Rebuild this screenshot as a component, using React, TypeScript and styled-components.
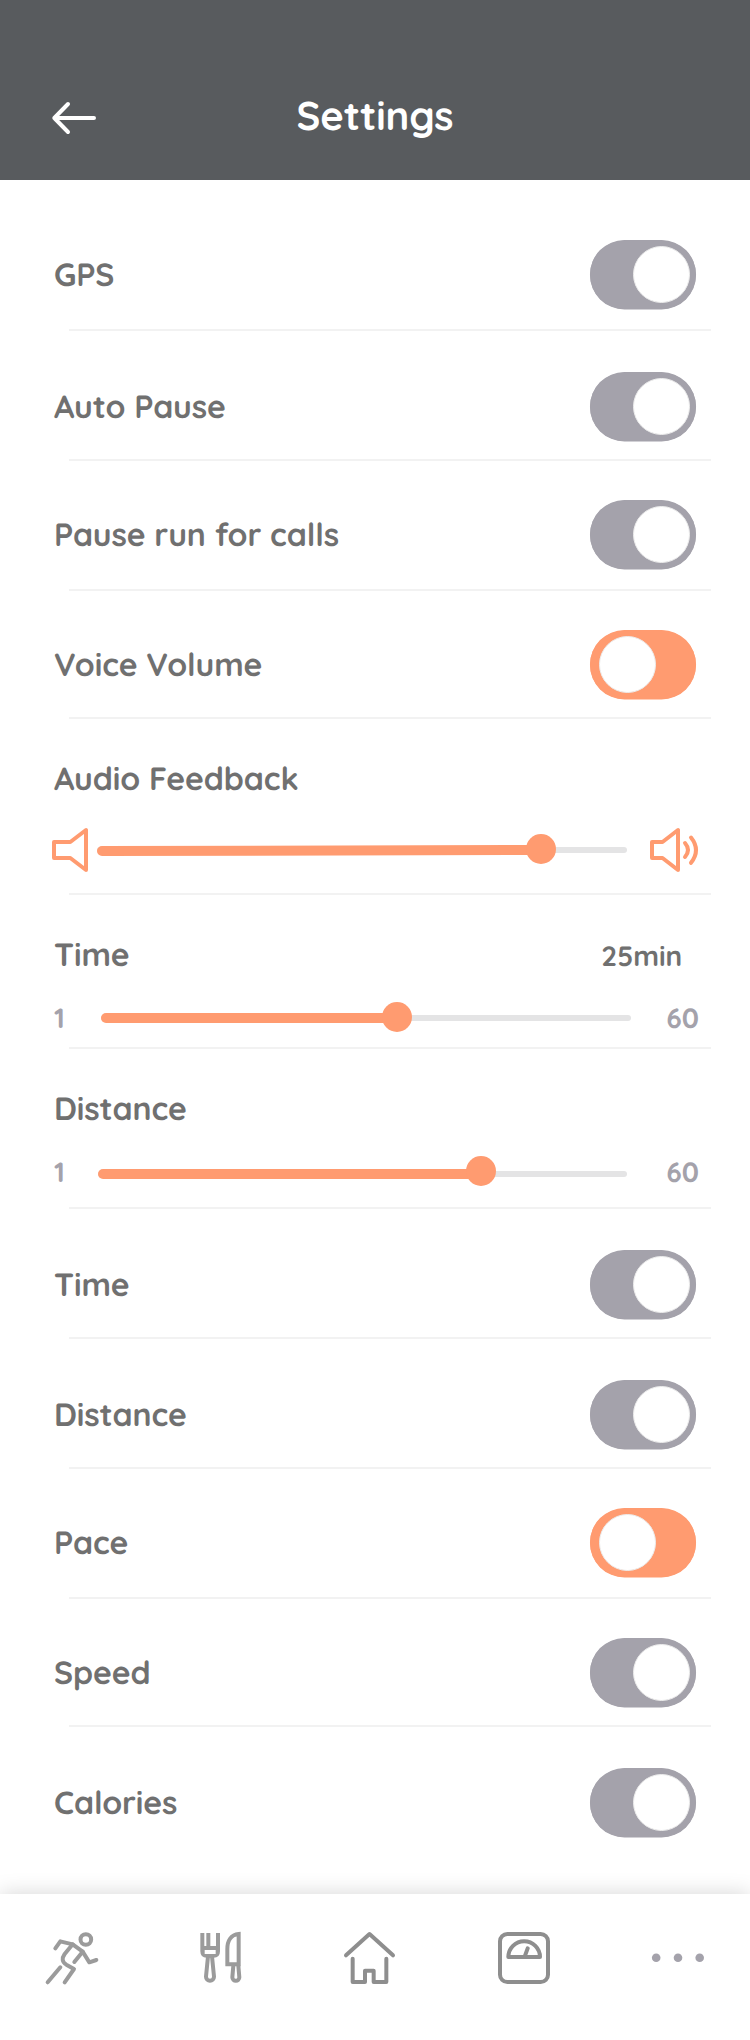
import React, { useState } from "react";
import styled, { createGlobalStyle } from "styled-components";

const color = {
  header: "#585b5e",
  accent: "#ff9b70",
  muted: "#a4a2ab",
  text: "#707070",
  line: "#f2f2f2",
  track: "#e4e4e5",
};

const GlobalStyle = createGlobalStyle`
  * { box-sizing: border-box; }
  body {
    margin: 0;
    background: #fff;
    font-family: Quicksand, Lato, "Open Sans", sans-serif;
    text-rendering: geometricPrecision;
  }
  svg { display: block; overflow: visible; }
  button { border: 0; padding: 0; background: none; }
`;

const Screen = styled.div`
  display: flex;
  flex-direction: column;
  width: 750px;
  height: 2040px;
  background: #fff;
  overflow: hidden;
`;

const Header = styled.header`
  display: grid;
  grid-template-columns: 100px 1fr 100px;
  height: 180px;
  padding: 56px 0 0;
  align-items: center;
  background: ${color.header};
`;

const BackButton = styled.button`
  margin-left: 52px;
  width: 44px;
`;

const Title = styled.h1`
  margin: 0;
  text-align: center;
  font-size: 40px;
  line-height: 48px;
  font-weight: 700;
  letter-spacing: -0.1px;
  color: #fff;
  padding-bottom: 6px;
`;

const List = styled.main`
  flex: 1;
`;

const Row = styled.section<{ $height: number; $top: number }>`
  display: flex;
  flex-direction: column;
  height: ${(p) => p.$height}px;
  padding-top: ${(p) => p.$top}px;
`;

const RowLine = styled.div<{ $below?: number }>`
  display: flex;
  justify-content: space-between;
  align-items: center;
  padding: 0 54px;
  margin-bottom: ${(p) => p.$below ?? 0}px;
`;

const Divider = styled.hr`
  width: 642px;
  height: 2px;
  margin: auto 0 0 69px;
  border: 0;
  background: ${color.line};
`;

const Label = styled.span`
  font-size: 32px;
  line-height: 40px;
  padding-bottom: 2px;
  font-weight: 700;
  letter-spacing: -0.1px;
  color: ${color.text};
  white-space: nowrap;
`;

const Value = styled.span`
  margin-right: 14px;
  font-size: 28px;
  line-height: 40px;
  padding-top: 2px;
  font-weight: 700;
  letter-spacing: -0.1px;
  color: ${color.text};
`;

const Switch = styled.button<{ $accent: boolean }>`
  display: flex;
  justify-content: ${(p) => (p.$accent ? "flex-start" : "flex-end")};
  width: 106px;
  height: 69px;
  padding: 6px 6px 0 9px;
  border-radius: 35px;
  background: ${(p) => (p.$accent ? color.accent : color.muted)};
  box-shadow: 0 0.5px 0 ${(p) => (p.$accent ? color.accent : color.muted)};
`;

const Knob = styled.span`
  width: 57px;
  height: 57px;
  border-radius: 50%;
  border: 1px solid #ececec;
  background: #fff;
`;

const SliderLine = styled.div<{ $gap: number }>`
  display: grid;
  grid-template-columns: ${(p) => p.$gap}px auto 1fr;
  align-items: center;
  height: 44px;
  padding: 0 52px;
`;

const Limit = styled.span<{ $end?: boolean; $lift?: number }>`
  padding-left: ${(p) => (p.$end ? 0 : 2)}px;
  padding-bottom: ${(p) => p.$lift ?? 0}px;
  margin-right: ${(p) => (p.$end ? -1 : 0)}px;
  font-size: 28px;
  line-height: 36px;
  font-weight: 700;
  color: ${color.muted};
  text-align: ${(p) => (p.$end ? "right" : "left")};
`;

const VolumeHigh = styled.span`
  justify-self: end;
`;

const Track = styled.div<{ $width: number }>`
  position: relative;
  width: ${(p) => p.$width}px;
  height: 6px;
  border-radius: 3px;
  background: ${color.track};
`;

const Fill = styled.div<{ $width: number; $tilt: number }>`
  position: absolute;
  left: 0;
  top: -2px;
  width: ${(p) => p.$width}px;
  height: 10px;
  border-radius: 5px;
  background: ${color.accent};
  transform: ${(p) => (p.$tilt ? `translateY(0.5px) rotate(${p.$tilt}deg)` : "none")};
`;

const Thumb = styled.div<{ $x: number; $lift: number }>`
  position: absolute;
  left: ${(p) => p.$x - 15}px;
  top: ${(p) => -12 - p.$lift}px;
  width: 30px;
  height: 30px;
  border-radius: 50%;
  background: ${color.accent};
`;

const TabBar = styled.nav`
  position: relative;
  display: flex;
  justify-content: space-between;
  align-items: flex-start;
  height: 146px;
  padding: 38px 46px 0;
  background: #fff;
  box-shadow: 0 0 20px rgba(0, 0, 0, 0.17);
`;

const Tab = styled.button<{ $width: number }>`
  width: ${(p) => p.$width}px;
  height: 52px;
`;

const Strokes = styled.svg<{ $square?: boolean }>`
  fill: none;
  stroke-width: 12;
  stroke-linecap: ${(p) => (p.$square ? "butt" : "round")};
  stroke-linejoin: ${(p) => (p.$square ? "miter" : "round")};
`;

function ToggleRow(props: {
  name: string;
  height: number;
  top: number;
  accent?: boolean;
  last?: boolean;
}) {
  const [accent, setAccent] = useState(!!props.accent);
  return (
    <Row $height={props.height} $top={props.top}>
      <RowLine>
        <Label>{props.name}</Label>
        <Switch $accent={accent} aria-label={props.name} onClick={() => setAccent(!accent)}>
          <Knob />
        </Switch>
      </RowLine>
      {!props.last && <Divider />}
    </Row>
  );
}

function Slider(props: { width: number; value: number; lift: number; tilt?: number }) {
  return (
    <Track $width={props.width}>
      <Fill $width={props.value} $tilt={props.tilt ?? 0} />
      <Thumb $x={props.value} $lift={props.lift} />
    </Track>
  );
}

export default function App() {
  return (
    <Screen>
      <GlobalStyle />
      <Header>
        <BackButton aria-label="Back">
          <svg width="44" height="32" viewBox="0 0 44 32" fill="none" stroke="#fff" strokeWidth="4" strokeLinecap="round" strokeLinejoin="round">
            <path d="M16 2 2.3 16 16 30M2.3 16H42" />
          </svg>
        </BackButton>
        <Title>Settings</Title>
      </Header>

      <List>
        <ToggleRow name="GPS" height={151} top={60} />
        <ToggleRow name="Auto Pause" height={130} top={41} />
        <ToggleRow name="Pause run for calls" height={130} top={39} />
        <ToggleRow name="Voice Volume" height={128} top={39} accent />

        <Row $height={176} $top={39}>
          <RowLine $below={28}>
            <Label>Audio Feedback</Label>
          </RowLine>
          <SliderLine $gap={45}>
            <svg width="36" height="44" viewBox="0 0 36 44" fill="none" stroke={color.accent} strokeWidth="4" strokeLinejoin="round">
              <path d="M2 14H18.3L34 2V42L18.3 30H2Z" />
            </svg>
            <Slider width={530} value={444} lift={1} tilt={-0.14} />
            <VolumeHigh>
              <svg width="48" height="44" viewBox="0 0 48 44" fill="none" stroke={color.accent} strokeWidth="4" strokeLinecap="round" strokeLinejoin="round">
                <path d="M2 14H12.5L28 2V42L12.5 30H2Z" />
                <path d="M35 15Q41 22 35 29M41 9.5Q51 22 41 34.8" />
              </svg>
            </VolumeHigh>
          </SliderLine>
          <Divider />
        </Row>

        <Row $height={154} $top={39}>
          <RowLine $below={20}>
            <Label>Time</Label>
            <Value>25min</Value>
          </RowLine>
          <SliderLine $gap={49}>
            <Limit>1</Limit>
            <Slider width={530} value={296} lift={1} />
            <Limit $end>60</Limit>
          </SliderLine>
          <Divider />
        </Row>

        <Row $height={160} $top={39}>
          <RowLine $below={22}>
            <Label>Distance</Label>
          </RowLine>
          <SliderLine $gap={46}>
            <Limit $lift={4}>1</Limit>
            <Slider width={529} value={383} lift={3} />
            <Limit $end $lift={4}>60</Limit>
          </SliderLine>
          <Divider />
        </Row>

        <ToggleRow name="Time" height={130} top={41} />
        <ToggleRow name="Distance" height={130} top={41} />
        <ToggleRow name="Pace" height={130} top={39} accent />
        <ToggleRow name="Speed" height={128} top={39} />
        <ToggleRow name="Calories" height={167} top={41} last />
      </List>

      <TabBar>
        <Tab $width={52} aria-label="Run">
          <Strokes width="52" height="52" viewBox="48 156 156 156" stroke="#9b9b9b">
            <circle cx="167.5" cy="178.5" r="16" />
            <path d="M76 205 91 184 128 193 158 215 178 247 199 240" />
            <path d="M128 193 104 222Q90 242 109 254L132 267 104 307M158 215 133 246M91 262 53 307" />
          </Strokes>
        </Tab>
        <Tab $width={41} aria-label="Meals">
          <Strokes $square width="41" height="52" viewBox="512 156 123 156" stroke="#9b9b9b">
            <path d="M516 159V214Q516 227 529 227H550Q563 227 563 214V159M534 159V204M516 204H563M516 216H563" />
            <path d="M533 229 527 290A11.5 11.5 0 1 0 551 290L545 229" />
            <path d="M625 162C602 164 591 182 591 207V253H625Z" />
            <path d="M609 257 606 292A10.5 10.5 0 1 0 627 292L624 257" />
            <path d="M523 216H556" stroke="#fff" />
          </Strokes>
        </Tab>
        <Tab $width={51} aria-label="Home">
          <Strokes width="51" height="52" viewBox="72 156 153 156" stroke="#8e8e8e">
            <path d="M78 226 148.500 162 219 226M98 236V306H135V272H161V306H199V236" />
          </Strokes>
        </Tab>
        <Tab $width={52} aria-label="Weight">
          <Strokes width="52" height="52" viewBox="534 156 156 156" stroke="#8e8e8e">
            <rect x="540" y="162" width="144" height="144" rx="22" />
            <path d="M565 231A47.500 47.500 0 0 1 660 231ZM623 205 614 230" />
          </Strokes>
        </Tab>
        <Tab $width={52} aria-label="More">
          <svg width="52" height="52" viewBox="0 0 52 52" fill={color.muted}>
            <circle cx="4.200" cy="25.800" r="4.300" />
            <circle cx="26" cy="25.800" r="4.300" />
            <circle cx="47.700" cy="25.800" r="4.300" />
          </svg>
        </Tab>
      </TabBar>
    </Screen>
  );
}
